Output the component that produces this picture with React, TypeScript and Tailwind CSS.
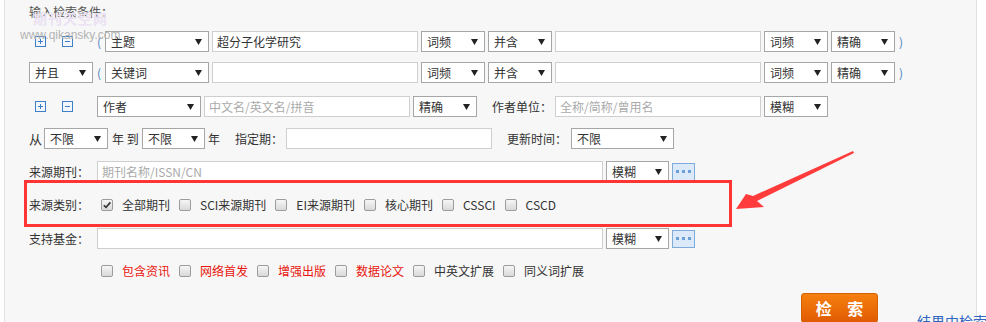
import React from "react";

const Sel = ({ label, w }: { label: string; w: string }) => (
  <div
    className={`flex h-[21px] shrink-0 items-center justify-between border border-[#a6a6a6] bg-white pl-[5px] pr-[6px] text-[12px] leading-none text-[#333] ${w}`}
  >
    <span>{label}</span>
    <svg width="7" height="6" viewBox="0 0 7 6">
      <path d="M0 0h7L3.5 6z" fill="#222" />
    </svg>
  </div>
);

const Inp = ({ w, value, ph }: { w: string; value?: string; ph?: string }) => (
  <div
    className={`flex h-[21px] shrink-0 items-center border border-[#cfcfcf] bg-white pl-[4px] text-[12px] leading-none ${w} ${
      value ? "text-[#333]" : "text-[#aaa]"
    }`}
  >
    {value ?? ph}
  </div>
);

const Box = ({ checked = false }: { checked?: boolean }) => (
  <span className="flex h-[12px] w-[12px] shrink-0 items-center justify-center rounded-[2px] border border-[#9c9c9c] bg-linear-to-b from-[#f6f6f6] to-[#d9d9d9]">
    {checked && (
      <svg width="10" height="10" viewBox="0 0 10 10">
        <path d="M1.8 5.2L4 7.4L8.4 2.4" fill="none" stroke="#333" strokeWidth="1.6" />
      </svg>
    )}
  </span>
);

const Check = ({ label, red, checked, first }: { label: string; red?: boolean; checked?: boolean; first?: boolean }) => (
  <div className={`flex items-center ${first ? "" : "ml-[9px]"}`}>
    <Box checked={checked} />
    <span className={`ml-[9px] text-[12px] ${red ? "text-[#e8150d]" : "text-[#333]"}`}>{label}</span>
  </div>
);

// + / - boxes in front of the condition rows
const PlusMinus = ({ minus }: { minus?: boolean }) => (
  <svg width="11" height="11" viewBox="0 0 11 11" className="shrink-0">
    <rect x="0.5" y="0.5" width="10" height="10" fill="#f3f7fc" stroke="#3d7fc9" />
    <path d="M3 5.5h5" stroke="#3d7fc9" />
    {!minus && <path d="M5.5 3v5" stroke="#3d7fc9" />}
  </svg>
);

const More = () => (
  <div className="ml-[3px] flex h-[18px] w-[23px] shrink-0 items-center justify-center gap-[3px] border border-[#7eaadc] bg-[#dce9f8]">
    <span className="h-[3px] w-[3px] bg-[#6a9fd8]" />
    <span className="h-[3px] w-[3px] bg-[#6a9fd8]" />
    <span className="h-[3px] w-[3px] bg-[#6a9fd8]" />
  </div>
);

export default function App() {
  return (
    <div className="relative h-[322px] w-[986px] overflow-hidden bg-white font-['Microsoft_YaHei','Noto_Sans_CJK_SC',sans-serif] text-[12px] text-[#333]">
      <div className="ml-[4px] h-full w-[973px] border-x border-[#e2e2e2] bg-[#f7f7f7] pl-[24px]">
        {/* title */}
        <div className="h-[20px] pt-[4px] text-[12px] leading-[16px] text-[#555]">输入检索条件：</div>

        {/* row 1 */}
        <div className="mt-[11px] flex h-[21px] items-center">
          <span className="ml-[6px]"><PlusMinus /></span>
          <span className="ml-[16px]"><PlusMinus minus /></span>
          <span className="ml-[24px] w-[8px] text-[#4a7fc0]">(</span>
          <Sel label="主题" w="w-[104px]" />
          <div className="ml-[3px]"><Inp w="w-[206px]" value="超分子化学研究" /></div>
          <div className="ml-[3px]"><Sel label="词频" w="w-[64px]" /></div>
          <div className="ml-[3px]"><Sel label="并含" w="w-[64px]" /></div>
          <div className="ml-[3px]"><Inp w="w-[206px]" /></div>
          <div className="ml-[3px]"><Sel label="词频" w="w-[64px]" /></div>
          <div className="ml-[3px]"><Sel label="精确" w="w-[64px]" /></div>
          <span className="ml-[4px] text-[#4a7fc0]">)</span>
        </div>

        {/* row 2 */}
        <div className="mt-[10px] flex h-[21px] items-center">
          <Sel label="并且" w="w-[64px]" />
          <span className="ml-[4px] w-[8px] text-[#4a7fc0]">(</span>
          <Sel label="关键词" w="w-[104px]" />
          <div className="ml-[3px]"><Inp w="w-[206px]" /></div>
          <div className="ml-[3px]"><Sel label="词频" w="w-[64px]" /></div>
          <div className="ml-[3px]"><Sel label="并含" w="w-[64px]" /></div>
          <div className="ml-[3px]"><Inp w="w-[206px]" /></div>
          <div className="ml-[3px]"><Sel label="词频" w="w-[64px]" /></div>
          <div className="ml-[3px]"><Sel label="精确" w="w-[64px]" /></div>
          <span className="ml-[4px] text-[#4a7fc0]">)</span>
        </div>

        {/* row 3 */}
        <div className="mt-[13px] flex h-[21px] items-center">
          <span className="ml-[6px]"><PlusMinus /></span>
          <span className="ml-[16px]"><PlusMinus minus /></span>
          <div className="ml-[24px]"><Sel label="作者" w="w-[104px]" /></div>
          <div className="ml-[3px]"><Inp w="w-[206px]" ph="中文名/英文名/拼音" /></div>
          <div className="ml-[3px]"><Sel label="精确" w="w-[64px]" /></div>
          <span className="ml-[15px] w-[60px]">作者单位：</span>
          <div className="ml-[3px]"><Inp w="w-[206px]" ph="全称/简称/曾用名" /></div>
          <div className="ml-[3px]"><Sel label="模糊" w="w-[64px]" /></div>
        </div>

        {/* row 4 */}
        <div className="mt-[11px] flex h-[21px] items-center">
          <span className="w-[12px] text-[13px]">从</span>
          <div className="ml-[3px]"><Sel label="不限" w="w-[64px]" /></div>
          <span className="ml-[4px] w-[26px] whitespace-pre">年 到</span>
          <div className="ml-[4px]"><Sel label="不限" w="w-[63px]" /></div>
          <span className="ml-[3px] w-[12px]">年</span>
          <span className="ml-[15px] w-[48px]">指定期：</span>
          <div className="ml-[3px]"><Inp w="w-[206px]" /></div>
          <span className="ml-[15px] w-[60px]">更新时间：</span>
          <div className="ml-[4px]"><Sel label="不限" w="w-[103px]" /></div>
        </div>

        {/* row 5 */}
        <div className="mt-[12px] flex h-[21px] items-center">
          <span className="w-[60px]">来源期刊：</span>
          <div className="ml-[8px]"><Inp w="w-[506px]" ph="期刊名称/ISSN/CN" /></div>
          <div className="ml-[3px]"><Sel label="模糊" w="w-[63px]" /></div>
          <More />
        </div>

        {/* source category */}
        <div className="relative flex h-[46px] items-center">
          <div className="absolute -top-[2px] -left-[5px] h-[47px] w-[708px] border-[3px] border-[#ff3535]" />
          <span className="w-[60px]">来源类别：</span>
          <div className="ml-[12px] flex items-center">
            <Check label="全部期刊" checked first />
            <Check label="SCI来源期刊" />
            <Check label="EI来源期刊" />
            <Check label="核心期刊" />
            <Check label="CSSCI" />
            <Check label="CSCD" />
          </div>
        </div>

        {/* row 6 */}
        <div className="flex h-[21px] items-center">
          <span className="w-[60px]">支持基金：</span>
          <div className="ml-[8px]"><Inp w="w-[506px]" /></div>
          <div className="ml-[3px]"><Sel label="模糊" w="w-[63px]" /></div>
          <More />
        </div>

        {/* row 7 */}
        <div className="mt-[14px] ml-[72px] flex h-[16px] items-center">
          <Check label="包含资讯" red first />
          <Check label="网络首发" red />
          <Check label="增强出版" red />
          <Check label="数据论文" red />
          <Check label="中英文扩展" />
          <Check label="同义词扩展" />
        </div>

        {/* buttons */}
        <div className="mt-[14px] flex items-start">
          <button className="ml-[772px] h-[30px] w-[77px] shrink-0 rounded-[3px] border border-[#d56000] bg-linear-to-b from-[#f6800f] to-[#e05a02] pl-[6px] text-[16px] font-bold tracking-[6px] text-white">
            检 索
          </button>
          <span className="mt-[18px] ml-[39px] shrink-0 whitespace-nowrap text-[14px] text-[#2f66c0]">结果中检索</span>
        </div>
      </div>

      {/* watermark */}
      <div className="pointer-events-none absolute top-[10px] left-[33px] text-[14px] font-bold leading-[16px] tracking-[1px] text-[#ebe2f3]">
        期刊天空网
      </div>
      <div className="pointer-events-none absolute top-[28px] left-[20px] font-['Liberation_Sans',sans-serif] text-[12px] leading-[14px] text-[#b3b3b3]">
        www.qikansky.com
      </div>

      {/* annotation arrow */}
      <svg className="pointer-events-none absolute top-0 left-0" width="986" height="322" viewBox="0 0 986 322">
        <polygon
          points="736,209 746,194 753,196 853,151 854,153 757,201 764,207"
          fill="#ff3b3b"
        />
      </svg>
    </div>
  );
}
